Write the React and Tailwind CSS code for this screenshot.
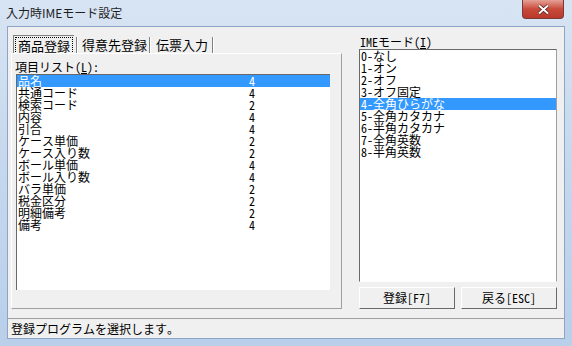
import React from 'react';

const font = { fontFamily: '"Noto Sans Mono CJK JP", "Noto Sans CJK JP", "DejaVu Sans Mono", monospace' };
const titleFont = { fontFamily: '"Noto Sans CJK JP", "Noto Sans", sans-serif' };

const items = [
  ['品名', 4],
  ['共通コード', 4],
  ['検索コード', 2],
  ['内容', 4],
  ['引合', 4],
  ['ケース単価', 2],
  ['ケース入り数', 2],
  ['ボール単価', 4],
  ['ボール入り数', 4],
  ['バラ単価', 2],
  ['税金区分', 2],
  ['明細備考', 2],
  ['備考', 4],
];

const modes = [
  '0-なし',
  '1-オン',
  '2-オフ',
  '3-オフ固定',
  '4-全角ひらがな',
  '5-全角カタカナ',
  '6-半角カタカナ',
  '7-全角英数',
  '8-半角英数',
];

const Sep = () => (
  <div className="mt-[10px] h-[16px] w-[2px] border-l border-[#808080] border-r border-r-white" />
);

const App = () => {
  return (
    <div
      className="flex h-[346px] w-[572px] flex-col bg-gradient-to-b from-[#d7e4f3] via-[#c5d7ed] to-[#b9cfea] text-black"
      style={font}
    >
      {/* title bar */}
      <div className="flex h-[26px] items-start">
        <span className="ml-[6px] mt-[5px] text-[12px] leading-[16px] text-[#1e1e1e]" style={titleFont}>
          入力時IMEモード設定
        </span>
        <div className="ml-auto mr-[8px] flex h-[19px] w-[42px] items-center justify-center rounded-b-[4px] border border-t-0 border-[#7a3838] bg-gradient-to-b from-[#e3a096] via-[#c9493a] to-[#b8392c]">
          <svg width="13" height="11" viewBox="0 0 13 11">
            <path d="M2 1.5 L11 9.5 M11 1.5 L2 9.5" stroke="#4a1a14" strokeWidth="3.4" />
            <path d="M2 1.5 L11 9.5 M11 1.5 L2 9.5" stroke="#ffffff" strokeWidth="2" />
          </svg>
        </div>
      </div>

      {/* client area */}
      <div className="mx-[7px] mb-[7px] flex flex-1 flex-col border border-[#8da5c4] bg-[#f0f0f0]">
        <div className="flex h-[282px]">
          {/* left column */}
          <div className="ml-[3px] flex w-[331px] flex-col">
            {/* tabs */}
            <div className="flex h-[26px] items-start text-[13px] leading-[15px]">
              <div className="ml-[2px] mt-[8px] border-l border-t border-[#808080] px-[1px] pt-[1px]">
                <div className="border border-dotted border-black px-[2px]">商品登録</div>
              </div>
              <div className="ml-[2px]">
                <Sep />
              </div>
              <div className="ml-[4px] mt-[10px]">得意先登録</div>
              <div className="ml-[2px]">
                <Sep />
              </div>
              <div className="ml-[5px] mt-[10px]">伝票入力</div>
              <div className="ml-[4px]">
                <Sep />
              </div>
            </div>
            {/* tab page */}
            <div className="flex h-[256px] flex-col border-l border-t border-white border-r-[#a0a0a0] border-b-[#a0a0a0] border-r border-b">
              <div className="ml-[3px] mt-[5px] h-[15px] text-[12px] leading-[15px]">
                項目リスト(<span className="underline">L</span>):
              </div>
              <div className="ml-[4px] mr-[11px] h-[216px] border-l border-t border-[#696969] border-r-white border-b-white bg-white">
                {items.map(([name, n], i) => (
                  <div
                    key={name}
                    className={
                      i === 0
                        ? 'flex h-[12px] items-center bg-[#3399ff] text-[12px] leading-[12px] text-white'
                        : 'flex h-[12px] items-center text-[12px] leading-[12px]'
                    }
                  >
                    <span className="w-[232px] pl-[1px]">{name}</span>
                    <span>{n}</span>
                  </div>
                ))}
              </div>
            </div>
          </div>

          {/* right column */}
          <div className="ml-[17px] flex w-[198px] flex-col">
            <div className="ml-[1px] mt-[7px] h-[15px] text-[12px] leading-[15px]">
              IMEモード(<span className="underline">I</span>)
            </div>
            <div className="h-[234px] border-l border-t border-[#696969] border-r border-r-[#a0a0a0] border-b border-b-white bg-white">
              {modes.map((m, i) => (
                <div
                  key={m}
                  className={
                    i === 4
                      ? 'h-[12px] bg-[#3399ff] pl-[1px] text-[12px] leading-[12px] text-white'
                      : 'h-[12px] pl-[1px] text-[12px] leading-[12px]'
                  }
                >
                  {m}
                </div>
              ))}
            </div>
            <div className="mt-[5px] flex gap-[6px]">
              <button className="h-[22px] w-[96px] border border-white border-r-[#696969] border-b-[#696969] bg-[#f0f0f0] text-[12px] leading-[12px]">
                登録[F7]
              </button>
              <button className="h-[22px] w-[96px] border border-white border-r-[#696969] border-b-[#696969] bg-[#f0f0f0] text-[12px] leading-[12px]">
                戻る[ESC]
              </button>
            </div>
          </div>
        </div>

        {/* status bar */}
        <div className="mt-[9px] flex flex-1 items-center border-t border-[#a0a0a0] pl-[3px] text-[12px] leading-[14px]">
          登録プログラムを選択します。
        </div>
      </div>
    </div>
  );
};

export default App;
